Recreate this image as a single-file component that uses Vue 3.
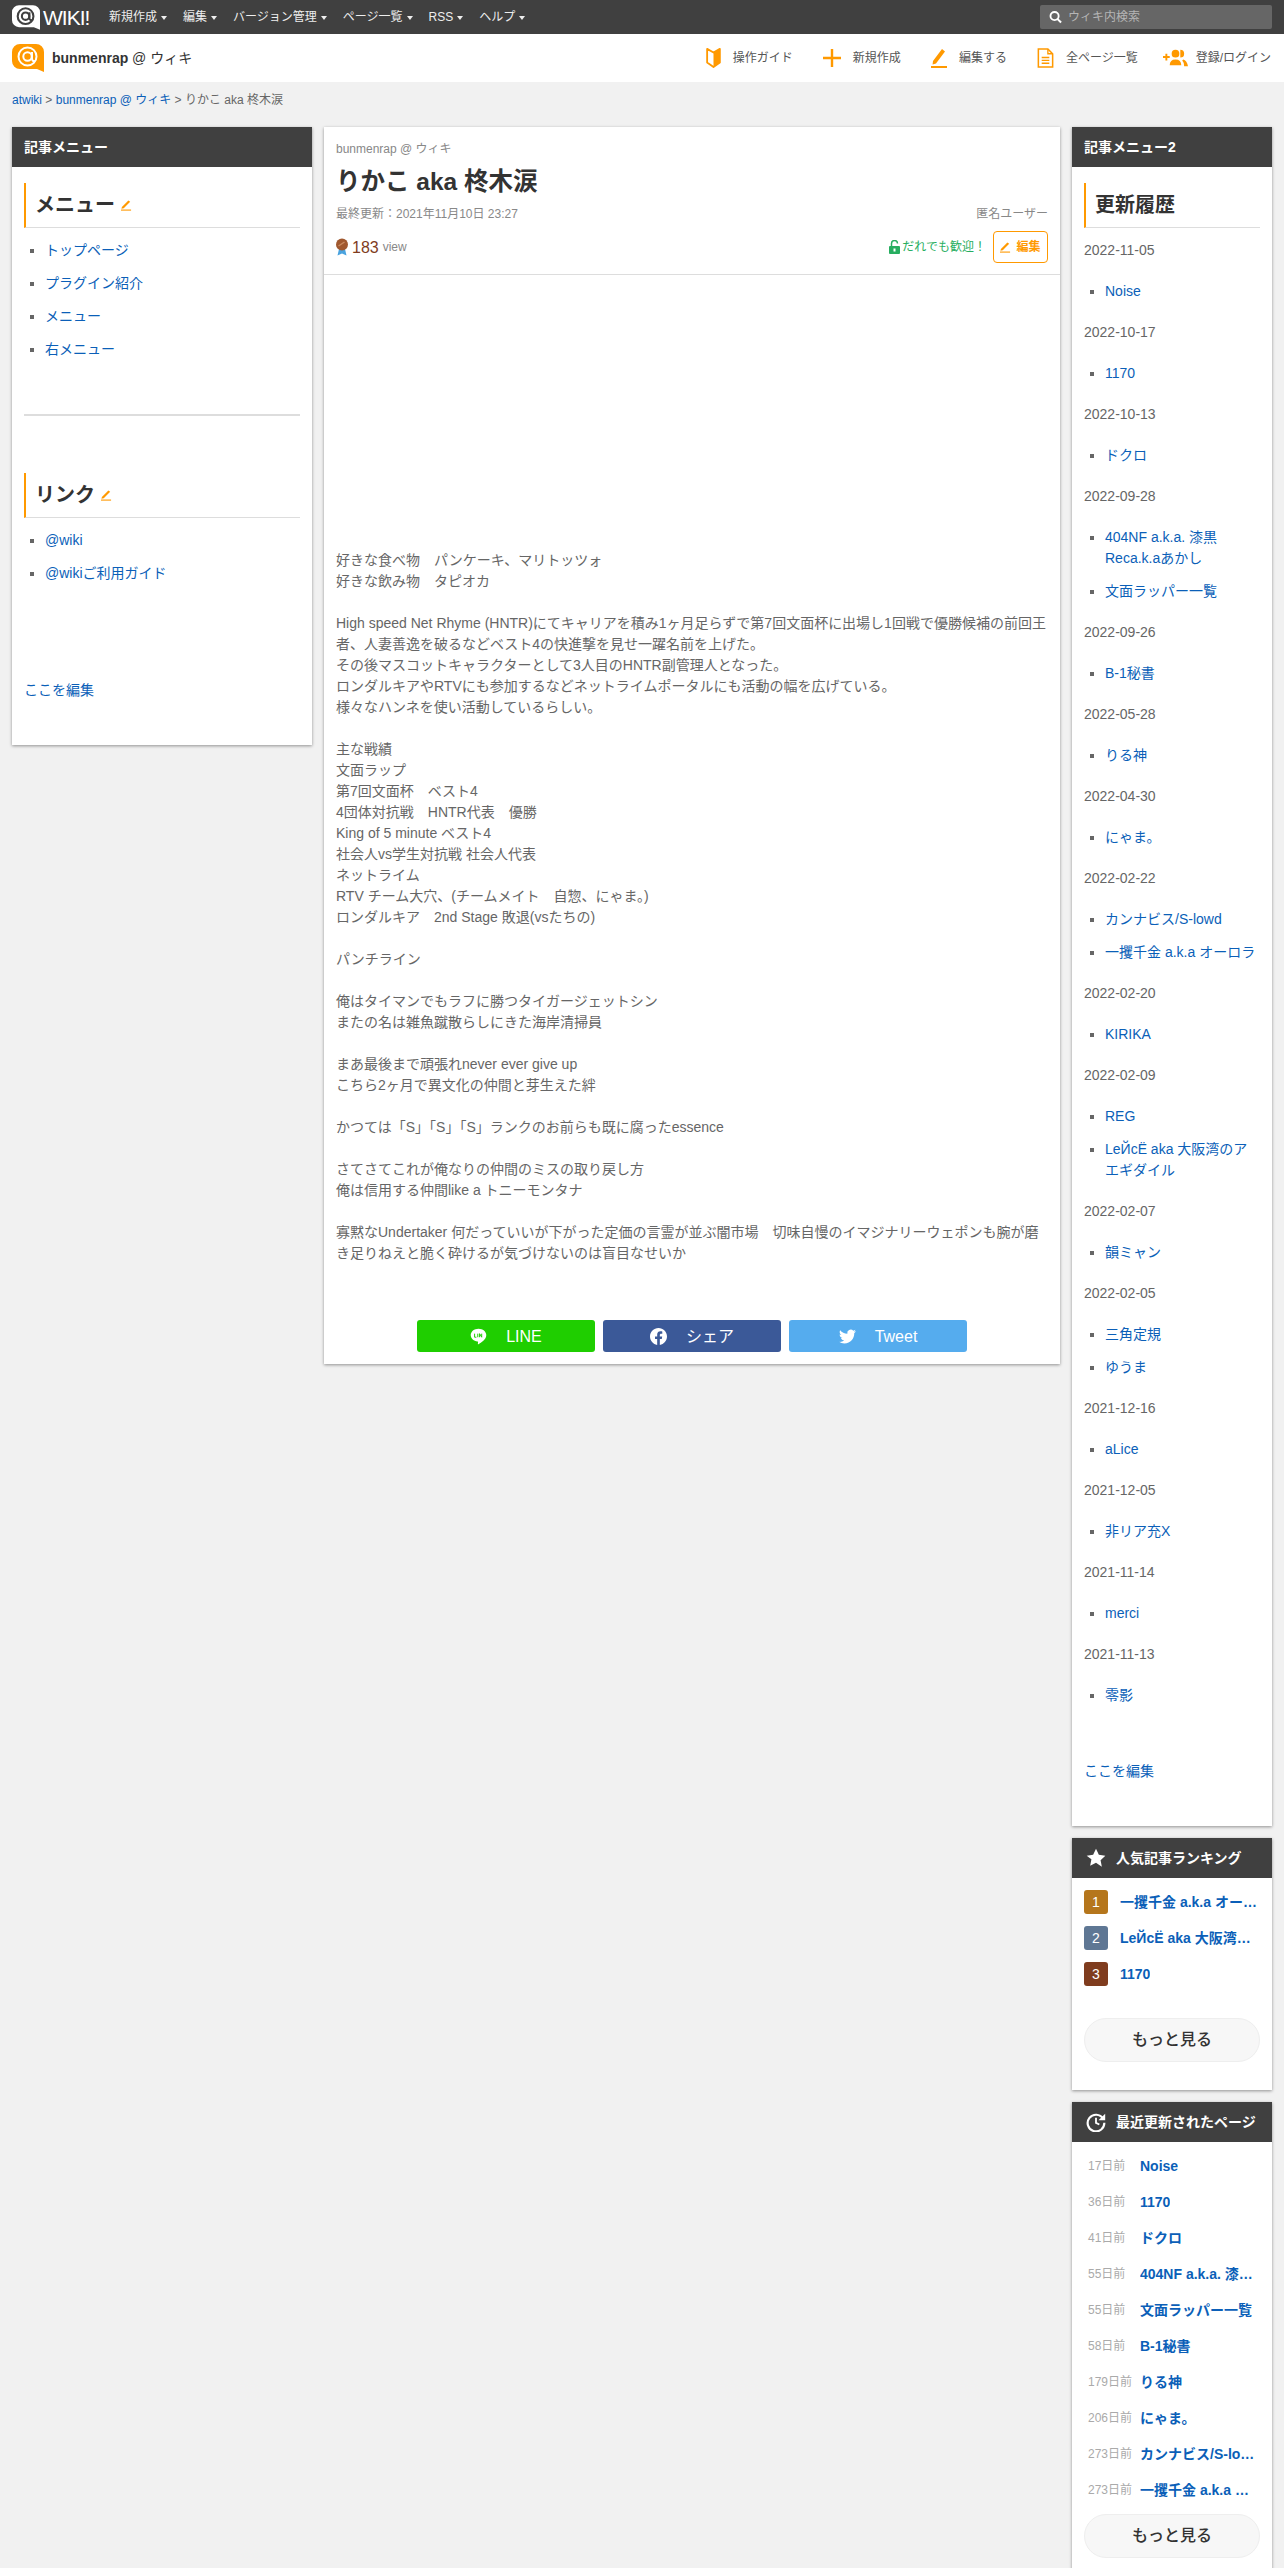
<script setup>
const navItems = ["新規作成", "編集", "バージョン管理", "ページ一覧", "RSS", "ヘルプ"];

const leftMenu = ["トップページ", "プラグイン紹介", "メニュー", "右メニュー"];
const leftLinks = ["@wiki", "@wikiご利用ガイド"];

const bodyText = `好きな食べ物　パンケーキ、マリトッツォ
好きな飲み物　タピオカ

High speed Net Rhyme (HNTR)にてキャリアを積み1ヶ月足らずで第7回文面杯に出場し1回戦で優勝候補の前回王者、人妻善逸を破るなどベスト4の快進撃を見せ一躍名前を上げた。
その後マスコットキャラクターとして3人目のHNTR副管理人となった。
ロンダルキアやRTVにも参加するなどネットライムポータルにも活動の幅を広げている。
様々なハンネを使い活動しているらしい。

主な戦績
文面ラップ
第7回文面杯　ベスト4
4団体対抗戦　HNTR代表　優勝
King of 5 minute ベスト4
社会人vs学生対抗戦 社会人代表
ネットライム
RTV チーム大穴、(チームメイト　自惣、にゃま。)
ロンダルキア　2nd Stage 敗退(vsたちの)

パンチライン

俺はタイマンでもラフに勝つタイガージェットシン
またの名は雑魚蹴散らしにきた海岸清掃員

まあ最後まで頑張れnever ever give up
こちら2ヶ月で異文化の仲間と芽生えた絆

かつては「S」「S」「S」ランクのお前らも既に腐ったessence

さてさてこれが俺なりの仲間のミスの取り戻し方
俺は信用する仲間like a トニーモンタナ

寡黙なUndertaker 何だっていいが下がった定価の言霊が並ぶ闇市場　切味自慢のイマジナリーウェポンも腕が磨き足りねえと脆く砕けるが気づけないのは盲目なせいか`;

const history = [
  { date: "2022-11-05", pages: ["Noise"] },
  { date: "2022-10-17", pages: ["1170"] },
  { date: "2022-10-13", pages: ["ドクロ"] },
  { date: "2022-09-28", pages: ["404NF a.k.a. 漆黒Reca.k.aあかし", "文面ラッパー一覧"] },
  { date: "2022-09-26", pages: ["B-1秘書"] },
  { date: "2022-05-28", pages: ["りる神"] },
  { date: "2022-04-30", pages: ["にゃま。"] },
  { date: "2022-02-22", pages: ["カンナビス/S-lowd", "一攫千金 a.k.a オーロラ"] },
  { date: "2022-02-20", pages: ["KIRIKA"] },
  { date: "2022-02-09", pages: ["REG", "LeЙсЁ aka 大阪湾のアエギダイル"] },
  { date: "2022-02-07", pages: ["韻ミャン"] },
  { date: "2022-02-05", pages: ["三角定規", "ゆうま"] },
  { date: "2021-12-16", pages: ["aLice"] },
  { date: "2021-12-05", pages: ["非リア充X"] },
  { date: "2021-11-14", pages: ["merci"] },
  { date: "2021-11-13", pages: ["零影"] },
];

const ranking = [
  { n: 1, title: "一攫千金 a.k.a オーロラ", color: "#b5761c" },
  { n: 2, title: "LeЙсЁ aka 大阪湾のアエギダイル", color: "#5f7794" },
  { n: 3, title: "1170", color: "#7f3c1e" },
];

const recent = [
  { ago: "17日前", title: "Noise" },
  { ago: "36日前", title: "1170" },
  { ago: "41日前", title: "ドクロ" },
  { ago: "55日前", title: "404NF a.k.a. 漆黒Reca.k.aあかし" },
  { ago: "55日前", title: "文面ラッパー一覧" },
  { ago: "58日前", title: "B-1秘書" },
  { ago: "179日前", title: "りる神" },
  { ago: "206日前", title: "にゃま。" },
  { ago: "273日前", title: "カンナビス/S-lowd" },
  { ago: "273日前", title: "一攫千金 a.k.a オーロラ" },
];
</script>

<template>
  <div class="page">
    <header class="topbar">
      <div class="brand">
        <svg class="brand-mark" viewBox="0 0 32 28">
          <path d="M8 0h16a8 8 0 0 1 8 8v20l-7-3H8a8 8 0 0 1-8-8V8a8 8 0 0 1 8-8z" fill="#fff" />
          <circle cx="15.5" cy="12.5" r="9" fill="none" stroke="#404040" stroke-width="2.4" />
          <circle cx="15.5" cy="12.5" r="4.2" fill="none" stroke="#404040" stroke-width="2.4" />
          <path d="M20 8v6.5q0 3 3 2.4" fill="none" stroke="#404040" stroke-width="2.2" />
        </svg>
        <span class="brand-word">WIKI!</span>
      </div>
      <nav class="topnav">
        <span v-for="item in navItems" :key="item" class="topnav-item">{{ item }}<i class="caret"></i></span>
      </nav>
      <div class="search">
        <svg class="search-icon" viewBox="0 0 14 14">
          <circle cx="6" cy="6" r="4.4" fill="none" stroke="#fff" stroke-width="2" />
          <path d="M9 9l4 4" stroke="#fff" stroke-width="2.2" />
        </svg>
        <span>ウィキ内検索</span>
      </div>
    </header>

    <div class="subbar">
      <div class="site">
        <svg class="site-mark" viewBox="0 0 32 28">
          <path d="M8 0h16a8 8 0 0 1 8 8v20l-7-3H8a8 8 0 0 1-8-8V8a8 8 0 0 1 8-8z" fill="#f90" />
          <circle cx="15.5" cy="12.5" r="9" fill="none" stroke="#fff" stroke-width="2" />
          <circle cx="15.5" cy="12.5" r="4.2" fill="none" stroke="#fff" stroke-width="2" />
          <path d="M20 8v6.5q0 3 3 2.4" fill="none" stroke="#fff" stroke-width="2" />
        </svg>
        <span class="site-name"><b>bunmenrap</b> @ ウィキ</span>
      </div>
      <div class="tools">
        <span class="tool">
          <svg class="tool-icon" viewBox="0 0 16 22" style="width:15px">
            <path d="M1 1l7 4 7-4v15l-7 5-7-5z" fill="#fff" stroke="#f90" stroke-width="2" stroke-linejoin="round" />
            <path d="M8 5l7-4v15l-7 5z" fill="#f90" />
          </svg>
          操作ガイド
        </span>
        <span class="tool">
          <svg class="tool-icon" viewBox="0 0 18 18" style="width:18px">
            <path d="M9 0v18M0 9h18" stroke="#f90" stroke-width="2.4" />
          </svg>
          新規作成
        </span>
        <span class="tool">
          <svg class="tool-icon" viewBox="0 0 16 20" style="width:16px">
            <path d="M2 13L11 1l3 2.4-9 12-3.4 1z" fill="#f90" />
            <path d="M0 19h16" stroke="#f90" stroke-width="2" />
          </svg>
          編集する
        </span>
        <span class="tool">
          <svg class="tool-icon" viewBox="0 0 17 21" style="width:17px">
            <path d="M1 1h10l5 5v14H1z" fill="#fff" stroke="#f90" stroke-width="1.6" />
            <path d="M11 1v5h5M4.500 10h8M4.500 13h8M4.500 16h8" fill="none" stroke="#f90" stroke-width="1.4" />
          </svg>
          全ページ一覧
        </span>
        <span class="tool tool-login">
          <svg class="tool-icon" viewBox="0 0 26 17" style="width:25px">
            <path d="M0 7.500h7M3.500 4v7" stroke="#f90" stroke-width="2" />
            <circle cx="13" cy="4" r="4" fill="#f90" />
            <path d="M7 16q0-6 6-6t6 6z" fill="#f90" />
            <path d="M18 0a4 4 0 0 1 0 8zM21 10q4 1 5 7h-4q0-4-2-6z" fill="#f90" />
          </svg>
          登録/ログイン
        </span>
      </div>
    </div>

    <div class="crumbs">
      <a>atwiki</a> &gt; <a>bunmenrap @ ウィキ</a> &gt; りかこ aka 柊木涙
    </div>

    <div class="layout">
      <aside class="card">
        <div class="card-head">記事メニュー</div>
        <div class="card-body left-body">
          <h3 class="side-title">
            メニュー
            <svg class="pen" viewBox="0 0 12 12"><path d="M1 7.500L8 .5l2 1.500-7 7-2.500.5z" fill="#f90" /><path d="M0 11h11" stroke="#f90" stroke-width="1.200" /></svg>
          </h3>
          <ul class="side-list">
            <li v-for="m in leftMenu" :key="m"><a>{{ m }}</a></li>
          </ul>
          <hr class="side-rule" />
          <h3 class="side-title">
            リンク
            <svg class="pen" viewBox="0 0 12 12"><path d="M1 7.500L8 .5l2 1.500-7 7-2.500.5z" fill="#f90" /><path d="M0 11h11" stroke="#f90" stroke-width="1.200" /></svg>
          </h3>
          <ul class="side-list">
            <li v-for="m in leftLinks" :key="m"><a>{{ m }}</a></li>
          </ul>
          <p class="edit-here"><a>ここを編集</a></p>
        </div>
      </aside>

      <main class="card article">
        <div class="article-head">
          <div class="article-site">bunmenrap @ ウィキ</div>
          <h1 class="article-title">りかこ aka 柊木涙</h1>
          <div class="article-meta">
            <span>最終更新：2021年11月10日 23:27</span>
            <span>匿名ユーザー</span>
          </div>
          <div class="article-row">
            <div class="views">
              <svg class="medal" viewBox="0 0 12 18">
                <path d="M3 11L1.500 17.500 6 15.500l4.500 2L9 11z" fill="#4aa3df" />
                <circle cx="6" cy="6.500" r="6" fill="#a0582f" />
                <path d="M2.500 8l6-4" stroke="#c98a5f" stroke-width="1.500" />
              </svg>
              <span class="view-count">183</span>
              <span class="view-label">view</span>
            </div>
            <div class="perm">
              <svg class="lock" viewBox="0 0 11 14">
                <path d="M2.500 6V3.500a3 3 0 0 1 6 0" fill="none" stroke="#27ae60" stroke-width="1.500" />
                <rect x="0" y="6" width="11" height="8" rx="1" fill="#27ae60" />
                <rect x="4.500" y="8.500" width="2" height="3" fill="#fff" />
              </svg>
              <span>だれでも歓迎！</span>
              <span class="edit-btn">
                <svg class="pen" viewBox="0 0 12 12"><path d="M1 7.500L8 .5l2 1.500-7 7-2.500.5z" fill="#f90" /><path d="M0 11h11" stroke="#f90" stroke-width="1.200" /></svg>
                編集
              </span>
            </div>
          </div>
        </div>

        <div class="ad-space"></div>
        <div class="article-text">{{ bodyText }}</div>

        <div class="share">
          <span class="share-btn line">
            <svg class="share-icon" viewBox="0 0 24 24">
              <path d="M12 1C5.900 1 1 5 1 10c0 5 4.500 8.500 9.500 9 .8.100 1 .6.800 1.500l-.2 2c0 .5.400.7 1 .4 3.500-2 10.900-6.400 10.900-12.900C23 5 18.100 1 12 1z" fill="#fff" />
              <path d="M6.500 8v5h2.500M11 8v5M13.500 13V8l3 5V8" fill="none" stroke="#1fce00" stroke-width="1.400" />
            </svg>
            LINE
          </span>
          <span class="share-btn fb">
            <svg class="share-icon" viewBox="0 0 24 24">
              <path d="M24 12.073c0-6.627-5.373-12-12-12s-12 5.373-12 12c0 5.990 4.388 10.954 10.125 11.854v-8.385H7.078v-3.470h3.047V9.430c0-3.007 1.792-4.669 4.533-4.669 1.312 0 2.686.235 2.686.235v2.953H15.830c-1.491 0-1.956.925-1.956 1.874v2.250h3.328l-.532 3.470h-2.796v8.385C19.612 23.027 24 18.062 24 12.073z" fill="#fff" />
            </svg>
            シェア
          </span>
          <span class="share-btn tw">
            <svg class="share-icon" viewBox="0 0 24 24">
              <path d="M23.953 4.570a10 10 0 01-2.825.775 4.958 4.958 0 002.163-2.723c-.951.555-2.005.959-3.127 1.184a4.920 4.920 0 00-8.384 4.482C7.690 8.095 4.067 6.130 1.640 3.162a4.822 4.822 0 00-.666 2.475c0 1.710.870 3.213 2.188 4.096a4.904 4.904 0 01-2.228-.616v.060a4.923 4.923 0 003.946 4.827 4.996 4.996 0 01-2.212.085 4.936 4.936 0 004.604 3.417 9.867 9.867 0 01-6.102 2.105c-.390 0-.779-.023-1.170-.067a13.995 13.995 0 007.557 2.209c9.053 0 13.998-7.496 13.998-13.985 0-.210 0-.420-.015-.630A9.935 9.935 0 0024 4.590z" fill="#fff" />
            </svg>
            Tweet
          </span>
        </div>
      </main>

      <aside class="right-col">
        <section class="card">
          <div class="card-head">記事メニュー2</div>
          <div class="card-body history">
            <h3 class="side-title">更新履歴</h3>
            <template v-for="h in history" :key="h.date">
              <p class="hist-date">{{ h.date }}</p>
              <ul class="side-list hist-list">
                <li v-for="p in h.pages" :key="p"><a>{{ p }}</a></li>
              </ul>
            </template>
            <p class="edit-here hist-edit"><a>ここを編集</a></p>
          </div>
        </section>

        <section class="card">
          <div class="card-head icon-head">
            <svg class="head-icon" viewBox="0 0 24 24">
              <path d="M12 1l3.400 7.200 7.800 1-5.700 5.400 1.500 7.800L12 17.600l-7 3.800 1.500-7.800L.8 9.200l7.800-1z" fill="#fff" />
            </svg>
            人気記事ランキング
          </div>
          <div class="card-body widget">
            <div v-for="r in ranking" :key="r.n" class="rank-row">
              <span class="rank-no" :style="{ background: r.color }">{{ r.n }}</span>
              <a class="widget-link">{{ r.title }}</a>
            </div>
            <div class="more more-rank">もっと見る</div>
          </div>
        </section>

        <section class="card">
          <div class="card-head icon-head">
            <svg class="head-icon" viewBox="0 0 24 24">
              <path d="M20.500 8A10 10 0 1 0 22 13" fill="none" stroke="#fff" stroke-width="2.600" />
              <path d="M23 2v8h-8z" fill="#fff" />
              <path d="M12 7v6l4 2" fill="none" stroke="#fff" stroke-width="2.200" />
            </svg>
            最近更新されたページ
          </div>
          <div class="card-body widget recent">
            <div v-for="(r, i) in recent" :key="i" class="recent-row">
              <span class="recent-ago">{{ r.ago }}</span>
              <a class="widget-link">{{ r.title }}</a>
            </div>
            <div class="more">もっと見る</div>
          </div>
        </section>
      </aside>
    </div>
  </div>
</template>

<style scoped>
.page {
  height: 2568px;
  overflow: hidden;
  background: #f1f1f1;
  color: #666;
  font-family: "Liberation Sans", "Noto Sans CJK JP", sans-serif;
  font-size: 14px;
  line-height: 21px;
}
a {
  color: #0b5fb8;
}

/* top bar */
.topbar {
  display: flex;
  align-items: center;
  height: 34px;
  padding: 0 12px;
  background: #404040;
  color: #fff;
}
.brand {
  display: flex;
  align-items: center;
  gap: 3px;
  width: 97px;
}
.brand-mark {
  width: 28px;
  height: 25px;
}
.brand-word {
  font-size: 21px;
  line-height: 25px;
  letter-spacing: -1px;
  color: #fff;
}
.topnav {
  display: flex;
  gap: 16px;
  font-size: 12px;
  color: #eee;
}
.topnav-item {
  display: flex;
  align-items: center;
  gap: 4px;
}
.caret {
  width: 0;
  height: 0;
  border-left: 3.500px solid transparent;
  border-right: 3.500px solid transparent;
  border-top: 4px solid #eee;
  margin-top: 2px;
}
.search {
  display: flex;
  align-items: center;
  gap: 6px;
  margin-left: auto;
  width: 232px;
  height: 24px;
  padding-left: 9px;
  box-sizing: border-box;
  background: #666;
  border-radius: 2px;
  color: #b5b5b5;
  font-size: 12px;
}
.search-icon {
  width: 13px;
  height: 14px;
}

/* second bar */
.subbar {
  display: flex;
  align-items: center;
  justify-content: space-between;
  height: 48px;
  padding: 0 13px 0 12px;
  background: #fff;
}
.site {
  display: flex;
  align-items: center;
  gap: 8px;
}
.site-mark {
  width: 32px;
  height: 28px;
}
.site-name {
  font-size: 14px;
  color: #333;
}
.tools {
  display: flex;
  gap: 30px;
  font-size: 12px;
  color: #555;
}
.tool {
  display: flex;
  align-items: center;
  gap: 12px;
}
.tool-login {
  gap: 8px;
  margin-left: -5px;
}
.tool-icon {
  height: 20px;
}

.crumbs {
  padding: 8px 12px 0;
  height: 38px;
  box-sizing: border-box;
  font-size: 12px;
  color: #666;
}

.layout {
  display: grid;
  grid-template-columns: 300px 736px 200px;
  gap: 12px;
  align-items: start;
  padding: 7px 12px 0;
}

.card {
  background: #fff;
  box-shadow: 0 1px 3px rgba(0, 0, 0, 0.4);
}
.card-head {
  height: 40px;
  padding: 0 12px;
  display: flex;
  align-items: center;
  background: #404040;
  color: #fff;
  font-weight: bold;
  font-size: 14px;
}
.card-body {
  padding: 16px 12px 0;
}

.side-title {
  display: flex;
  align-items: center;
  gap: 6px;
  height: 45px;
  margin: 0;
  padding-left: 9px;
  box-sizing: border-box;
  border-left: 2px solid #f90;
  border-bottom: 1px solid #ddd;
  font-size: 20px;
  font-weight: bold;
  color: #333;
}
.pen {
  width: 11px;
  height: 11px;
  flex: none;
}
.side-list {
  margin: 6px 0 0;
  padding-left: 21px;
  list-style: square;
}
.side-list li {
  padding: 6px 0;
}
.side-rule {
  margin: 48px 0 57px;
  border: 0;
  border-top: 2px solid #ddd;
}
.edit-here {
  margin: 90px 0 0;
}
.left-body {
  padding-bottom: 44px;
}

/* article */
.article-head {
  padding: 12px 12px 0;
  height: 148px;
  box-sizing: border-box;
  border-bottom: 1px solid #ddd;
}
.article-site {
  font-size: 12px;
  color: #888;
}
.article-title {
  margin: 5px 0 0;
  font-size: 24.5px;
  line-height: 34px;
  font-weight: bold;
  color: #333;
}
.article-meta {
  display: flex;
  justify-content: space-between;
  margin-top: 5px;
  font-size: 12px;
  color: #888;
}
.article-row {
  display: flex;
  justify-content: space-between;
  align-items: center;
  margin-top: 6px;
}
.views {
  display: flex;
  align-items: center;
  gap: 4px;
}
.medal {
  width: 12px;
  height: 18px;
}
.view-count {
  font-size: 16px;
  color: #7f3c1e;
}
.view-label {
  font-size: 12px;
  color: #888;
}
.perm {
  display: flex;
  align-items: center;
  gap: 2px;
  font-size: 12px;
  color: #27ae60;
}
.lock {
  width: 11px;
  height: 14px;
}
.edit-btn {
  display: flex;
  align-items: center;
  justify-content: center;
  gap: 5px;
  width: 55px;
  height: 32px;
  margin-left: 5px;
  box-sizing: border-box;
  border: 1px solid #f90;
  border-radius: 4px;
  color: #f90;
  font-weight: bold;
}
.ad-space {
  height: 275px;
}
.article-text {
  padding: 0 12px;
  white-space: pre-line;
}
.share {
  display: flex;
  justify-content: center;
  gap: 8px;
  padding: 56px 0 12px;
}
.share-btn {
  display: flex;
  align-items: center;
  justify-content: center;
  gap: 19px;
  width: 178px;
  height: 32px;
  border-radius: 3px;
  color: #fff;
  font-size: 16px;
}
.share-icon {
  width: 17px;
  height: 17px;
}
.line {
  background: #1fce00;
}
.fb {
  background: #3b5998;
}
.tw {
  background: #55acee;
}

/* right column */
.right-col {
  display: flex;
  flex-direction: column;
  gap: 12px;
}
.hist-date {
  margin: 14px 0 0;
}
.hist-list {
  margin: 14px 0 0;
}
.history .hist-date:first-of-type {
  margin-top: 12px;
}
.hist-edit {
  margin-top: 49px;
}
.history {
  padding-bottom: 44px;
}

.icon-head {
  gap: 10px;
  padding-left: 14px;
  font-size: 14px;
}
.head-icon {
  width: 20px;
  height: 20px;
  flex: none;
}
.widget {
  padding-top: 12px;
}
.rank-row {
  display: flex;
  align-items: center;
  gap: 12px;
  height: 24px;
  margin-bottom: 12px;
  padding-right: 3px;
}
.rank-no {
  flex: none;
  width: 24px;
  height: 24px;
  border-radius: 3px;
  text-align: center;
  line-height: 24px;
  color: #fff;
}
.widget-link {
  min-width: 0;
  overflow: hidden;
  white-space: nowrap;
  text-overflow: ellipsis;
  font-weight: bold;
}
.more {
  height: 44px;
  line-height: 42px;
  box-sizing: border-box;
  border: 1px solid #eee;
  border-radius: 22px;
  background: #f7f7f7;
  text-align: center;
  font-size: 16px;
  font-weight: 500;
  color: #333;
}
.more-rank {
  margin: 32px 0 28px;
}
.recent-row {
  display: flex;
  align-items: center;
  height: 36px;
  padding-right: 5px;
}
.recent {
  padding-top: 6px;
  padding-bottom: 30px;
}
.recent-ago {
  flex: none;
  width: 56px;
  padding-left: 4px;
  box-sizing: border-box;
  font-size: 12px;
  color: #aaa;
  white-space: nowrap;
}
.recent .more {
  margin-top: 6px;
}
</style>

<style>
body {
  margin: 0;
  background: #f1f1f1;
}
</style>
